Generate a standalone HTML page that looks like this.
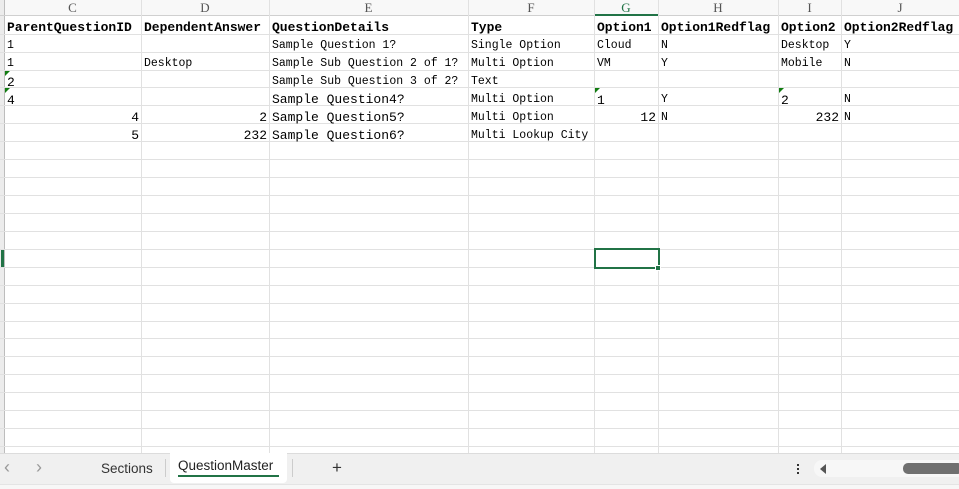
<!DOCTYPE html>
<html><head><meta charset="utf-8"><style>
*{margin:0;padding:0;box-sizing:border-box}
body{width:959px;height:489px;overflow:hidden;background:#fff;position:relative;font-family:"Liberation Mono",monospace;color:#000}
.hl{position:absolute;left:0;width:959px;height:1px;background:#e1e1e1}
.vl{position:absolute;top:0;width:1px;height:453px;background:#e1e1e1}
.c{position:absolute;height:18px;line-height:18px;font-size:11.5px;white-space:nowrap;padding-left:3px;margin-top:2px}
.b{font-weight:bold;font-size:13px}
.L{font-size:13px}
.r{text-align:right;padding-right:2px;padding-left:0}
.colh{position:absolute;top:0;height:16px;line-height:16px;font-family:"Liberation Serif",serif;font-size:13px;color:#555;text-align:center}
.tri{position:absolute;width:0;height:0;border-top:5px solid #107c10;border-right:5px solid transparent}
</style></head><body>
<div style="position:absolute;left:0;top:0;width:959px;height:16px;background:#f8f8f8"></div>
<div style="position:absolute;left:0;top:0;width:4px;height:453px;background:#ececec"></div>
<div style="position:absolute;left:4px;top:0;width:1px;height:453px;background:#bdbdbd"></div>
<div style="position:absolute;left:1px;top:249px;width:3px;height:19px;background:#217346"></div>
<div style="position:absolute;left:0;top:15px;width:959px;height:1px;background:#d0d0d0"></div>
<div style="position:absolute;left:595px;top:14px;width:63px;height:2px;background:#217346"></div>

<div class="vl" style="left:141px"></div><div class="vl" style="left:269px"></div><div class="vl" style="left:468px"></div><div class="vl" style="left:594px"></div><div class="vl" style="left:658px"></div><div class="vl" style="left:778px"></div><div class="vl" style="left:841px"></div>

<div class="hl" style="top:34px"></div><div class="hl" style="top:52px"></div><div class="hl" style="top:70px"></div><div class="hl" style="top:87px"></div><div class="hl" style="top:105px"></div><div class="hl" style="top:123px"></div><div class="hl" style="top:141px"></div><div class="hl" style="top:159px"></div><div class="hl" style="top:177px"></div><div class="hl" style="top:195px"></div><div class="hl" style="top:213px"></div><div class="hl" style="top:231px"></div><div class="hl" style="top:249px"></div><div class="hl" style="top:267px"></div><div class="hl" style="top:285px"></div><div class="hl" style="top:303px"></div><div class="hl" style="top:321px"></div><div class="hl" style="top:338px"></div><div class="hl" style="top:356px"></div><div class="hl" style="top:374px"></div><div class="hl" style="top:392px"></div><div class="hl" style="top:410px"></div><div class="hl" style="top:428px"></div><div class="hl" style="top:446px"></div>

<div class="colh" style="left:4px;width:137px">C</div>
<div class="colh" style="left:141px;width:128px">D</div>
<div class="colh" style="left:269px;width:199px">E</div>
<div class="colh" style="left:468px;width:126px">F</div>
<div class="colh" style="left:594px;width:64px;color:#217346">G</div>
<div class="colh" style="left:658px;width:120px">H</div>
<div class="colh" style="left:778px;width:63px">I</div>
<div class="colh" style="left:841px;width:118px">J</div>

<div class="c b" style="left:4px;top:17px">ParentQuestionID</div>
<div class="c b" style="left:141px;top:17px">DependentAnswer</div>
<div class="c b" style="left:269px;top:17px">QuestionDetails</div>
<div class="c b" style="left:468px;top:17px">Type</div>
<div class="c b" style="left:594px;top:17px">Option1</div>
<div class="c b" style="left:658px;top:17px">Option1Redflag</div>
<div class="c b" style="left:778px;top:17px">Option2</div>
<div class="c b" style="left:841px;top:17px">Option2Redflag</div>

<div class="c" style="left:4px;top:35px">1</div>
<div class="c" style="left:269px;top:35px">Sample Question 1?</div>
<div class="c" style="left:468px;top:35px">Single Option</div>
<div class="c" style="left:594px;top:35px">Cloud</div>
<div class="c" style="left:658px;top:35px">N</div>
<div class="c" style="left:778px;top:35px">Desktop</div>
<div class="c" style="left:841px;top:35px">Y</div>

<div class="c" style="left:4px;top:53px">1</div>
<div class="c" style="left:141px;top:53px">Desktop</div>
<div class="c" style="left:269px;top:53px">Sample Sub Question 2 of 1?</div>
<div class="c" style="left:468px;top:53px">Multi Option</div>
<div class="c" style="left:594px;top:53px">VM</div>
<div class="c" style="left:658px;top:53px">Y</div>
<div class="c" style="left:778px;top:53px">Mobile</div>
<div class="c" style="left:841px;top:53px">N</div>

<div class="c L" style="left:4px;top:72px">2</div>
<div class="c" style="left:269px;top:71px">Sample Sub Question 3 of 2?</div>
<div class="c" style="left:468px;top:71px">Text</div>

<div class="c L" style="left:4px;top:90px">4</div>
<div class="c L" style="left:269px;top:89px">Sample Question4?</div>
<div class="c" style="left:468px;top:89px">Multi Option</div>
<div class="c L" style="left:594px;top:90px">1</div>
<div class="c" style="left:658px;top:89px">Y</div>
<div class="c L" style="left:778px;top:90px">2</div>
<div class="c" style="left:841px;top:89px">N</div>

<div class="c L r" style="left:4px;width:137px;top:107px">4</div>
<div class="c L r" style="left:141px;width:128px;top:107px">2</div>
<div class="c L" style="left:269px;top:107px">Sample Question5?</div>
<div class="c" style="left:468px;top:107px">Multi Option</div>
<div class="c L r" style="left:594px;width:64px;top:107px">12</div>
<div class="c" style="left:658px;top:107px">N</div>
<div class="c L r" style="left:778px;width:63px;top:107px">232</div>
<div class="c" style="left:841px;top:107px">N</div>

<div class="c L r" style="left:4px;width:137px;top:125px">5</div>
<div class="c L r" style="left:141px;width:128px;top:125px">232</div>
<div class="c L" style="left:269px;top:125px">Sample Question6?</div>
<div class="c" style="left:468px;top:125px">Multi Lookup City</div>

<div class="tri" style="left:5px;top:71px"></div>
<div class="tri" style="left:5px;top:88px"></div>
<div class="tri" style="left:595px;top:88px"></div>
<div class="tri" style="left:779px;top:88px"></div>

<div style="position:absolute;left:594px;top:248px;width:66px;height:21px;border:2px solid #217346"></div>
<div style="position:absolute;left:655px;top:265px;width:6px;height:6px;background:#217346;border:1px solid #fff"></div>

<div style="position:absolute;left:0;top:453px;width:959px;height:31px;background:#f0f0f0;border-top:1px solid #dcdcdc"></div>
<div style="position:absolute;left:0;top:484px;width:959px;height:5px;background:#f7f7f7;border-top:1px solid #e4e4e4"></div>
<div style="position:absolute;left:4px;top:457px;font-family:'Liberation Sans',sans-serif;font-size:18px;color:#999">&#8249;</div>
<div style="position:absolute;left:36px;top:457px;font-family:'Liberation Sans',sans-serif;font-size:18px;color:#999">&#8250;</div>
<div style="position:absolute;left:101px;top:461px;font-family:'Liberation Sans',sans-serif;font-size:13.5px;color:#333">Sections</div>
<div style="position:absolute;left:165px;top:459px;width:1px;height:18px;background:#ccc"></div>
<div style="position:absolute;left:170px;top:453px;width:117px;height:30px;background:#fff;border-radius:0 0 4px 4px"></div>
<div style="position:absolute;left:178px;top:458px;font-family:'Liberation Sans',sans-serif;font-size:13.5px;color:#222">QuestionMaster</div>
<div style="position:absolute;left:178px;top:475px;width:101px;height:2px;background:#217346"></div>
<div style="position:absolute;left:292px;top:459px;width:1px;height:18px;background:#ccc"></div>
<div style="position:absolute;left:332px;top:458px;font-family:'Liberation Sans',sans-serif;font-size:17px;color:#333">+</div>
<div style="position:absolute;left:797px;top:464px;width:2px;height:2px;background:#333;box-shadow:0 4px #333,0 8px #333"></div>
<div style="position:absolute;left:814px;top:460px;width:145px;height:17px;background:#f7f7f7;border-radius:8px 0 0 8px"></div>
<div style="position:absolute;left:820px;top:464px;width:0;height:0;border-top:5px solid transparent;border-bottom:5px solid transparent;border-right:6px solid #555"></div>
<div style="position:absolute;left:903px;top:463px;width:60px;height:11px;background:#707070;border-radius:5px"></div>
</body></html>
